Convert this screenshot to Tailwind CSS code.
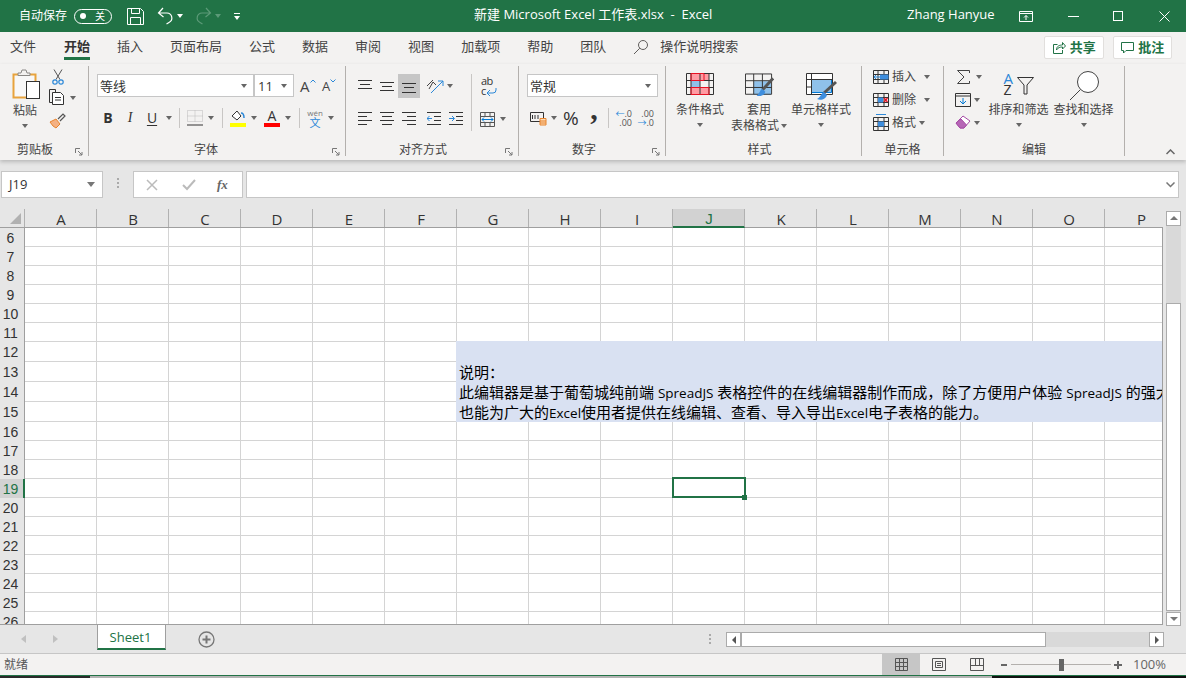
<!doctype html>
<html>
<head>
<meta charset="utf-8">
<script src="https://cdn.jsdelivr.net/npm/@tailwindcss/browser@4"></script>
<title>Excel</title>
</head>
<body class="m-0 w-[1186px] h-[678px] overflow-hidden bg-[#e6e6e6] font-['Open_Sans','Noto_Sans_CJK_SC',sans-serif] text-[#444]">

<!-- Title bar -->
<div class="h-[32px] bg-[#217346] flex items-center text-white">
    <span class="ml-[19px] w-[48px] text-[12px] whitespace-nowrap">自动保存</span>
    <div class="ml-[7px] w-[38px] h-[15px] rounded-full border border-white flex items-center justify-between pl-[5px] pr-[6px]">
        <i class="block w-[6px] h-[6px] rounded-full bg-white"></i>
        <span class="text-[10px] leading-none">关</span>
    </div>
    <svg class="ml-[15px] w-[17px] h-[17px]" viewBox="0 0 17 17" fill="none" stroke="#fff"><path d="M.5.5h13l3 3v13H.5zM4.5.5v5h8v-5M3.5 16.5v-7h10v7"/></svg>
    <svg class="ml-[13px] w-[17px] h-[18px]" viewBox="0 0 17 18" fill="none" stroke="#fff" stroke-width="1.2"><path d="M6 1L1.5 6l5 4M2 6h8a5 5 0 0 1 2 9.5L9.500 17"/></svg>
    <i class="ml-[3px] block w-0 h-0 border-x-[3.5px] border-x-transparent border-t-[4px] border-t-white"></i>
    <svg class="ml-[12px] w-[17px] h-[18px]" viewBox="0 0 17 18" fill="none" stroke="#5c9a78" stroke-width="1.2"><path d="M11 1l4.500 5-5 4M15 6H7a5 5 0 0 0-2 9.500L7.500 17"/></svg>
    <i class="ml-[3px] block w-0 h-0 border-x-[3.5px] border-x-transparent border-t-[4px] border-t-[#5c9a78]"></i>
    <div class="ml-[13px] flex flex-col items-center gap-[2px]">
        <i class="block w-[6px] h-px bg-white"></i>
        <i class="block w-0 h-0 border-x-[3.5px] border-x-transparent border-t-[4px] border-t-white"></i>
    </div>
    <span class="ml-[234px] -mt-[2px] w-[232px] text-[13px] whitespace-pre">新建 Microsoft Excel 工作表.xlsx  -  Excel</span>
    <span class="ml-[201px] -mt-[2px] w-[84px] text-[13px] whitespace-nowrap">Zhang Hanyue</span>
    <svg class="ml-[28px] w-[14px] h-[11px]" viewBox="0 0 14 11" fill="none" stroke="#fff"><path d="M.5.5h13v10H.5zM.5 2.500h13M7 9V4.500M5 6.500l2-2 2 2"/></svg>
    <i class="ml-[35px] block w-[11px] h-px bg-white"></i>
    <i class="ml-[34px] block w-[10px] h-[10px] border border-white"></i>
    <svg class="ml-[36px] w-[11px] h-[11px]" viewBox="0 0 11 11" stroke="#fff"><path d="M.5.5l10 10M10.500.5l-10 10"/></svg>
</div>

<!-- Tabs -->
<div class="h-[32px] bg-[#f3f2f1] flex items-start text-[13px] text-[#444]">
    <div class="flex gap-[27px] pl-[10px] pt-[5px] leading-[18px]">
        <span>文件</span>
        <span class="relative font-bold text-[#333] ml-[1px]">开始<i class="absolute left-0 right-0 top-[20px] h-[3px] bg-[#217346]"></i></span>
        <span>插入</span>
        <span>页面布局</span>
        <span>公式</span>
        <span>数据</span>
        <span>审阅</span>
        <span>视图</span>
        <span>加载项</span>
        <span>帮助</span>
        <span>团队</span>
    </div>
    <svg class="ml-[27px] mt-[7px] w-[16px] h-[16px]" viewBox="0 0 16 16" fill="none" stroke="#605e5c"><circle cx="10" cy="6" r="4.500"/><path d="M6.800 9.200L1 15"/></svg>
    <span class="ml-[11px] pt-[5px] leading-[18px]">操作说明搜索</span>
    <div class="ml-[306px] mt-[4px] w-[60px] h-[23px] bg-white border border-[#e1dfdd] rounded-[2px] flex items-center justify-center gap-[4px]">
        <svg class="w-[13px] h-[13px]" viewBox="0 0 13 13" fill="none" stroke="#217346"><path d="M4.500 3.500H.5v9h9V9M3.500 9c0-4 3-5 6-5V1.500l3 3.500-3 3V6c-2.500 0-4.500.5-6 3z"/></svg>
        <span class="font-bold text-[#217346]">共享</span>
    </div>
    <div class="ml-[9px] mt-[4px] w-[59px] h-[23px] bg-white border border-[#e1dfdd] rounded-[2px] flex items-center justify-center gap-[4px]">
        <svg class="w-[13px] h-[13px]" viewBox="0 0 13 13" fill="none" stroke="#217346"><path d="M.5 1.500h12v8H5L2.500 12V9.500h-2z"/></svg>
        <span class="font-bold text-[#217346]">批注</span>
    </div>
</div>

<!-- Ribbon -->
<div class="relative h-[96px] bg-[#f3f2f1] shadow-[0_2px_4px_rgba(0,0,0,0.2)] flex pt-[2px] text-[12px] leading-[16px] text-[#444]">

    <!-- Clipboard -->
    <div class="w-[89px] h-[90px] border-r border-[#b3b0ad] flex flex-col">
        <div class="h-[77px] flex">
            <div class="w-[46px] flex flex-col items-center pl-[4px]">
                <svg class="ml-[4px] mt-[3px] w-[30px] h-[31px]" viewBox="0 0 30 31" fill="none"><rect x="1.500" y="5.500" width="22" height="23" fill="#f8f8f8" stroke="#e8a33d" stroke-width="2"/><path d="M6 6.500h12V4h-3l-1-3h-4L9 4H6z" fill="#f3f2f1" stroke="#8a8886"/><rect x="14.500" y="12.500" width="13" height="17" fill="#fff" stroke="#333"/></svg>
                <span class="mt-[3px]">粘贴</span>
                <i class="mt-[5px] block w-0 h-0 border-x-[3.5px] border-x-transparent border-t-[4px] border-t-[#666]"></i>
            </div>
            <div class="ml-[3px] flex flex-col">
                <svg class="ml-[3px] mt-[3px] w-[12px] h-[16px]" viewBox="0 0 12 16" fill="none"><path d="M2 .5l6 10M10 .5l-6 10" stroke="#555"/><circle cx="3" cy="13" r="2.200" stroke="#2b88d8" stroke-width="1.200"/><circle cx="9" cy="13" r="2.200" stroke="#2b88d8" stroke-width="1.200"/></svg>
                <div class="mt-[4px] flex items-center">
                    <svg class="w-[17px] h-[17px]" viewBox="0 0 17 17" fill="none" stroke="#333"><path d="M6.500 3.500V.5h-6v13h3"/><path d="M3.500 3.500h8l3 3v9h-11z" fill="#fff"/><path d="M6 8.500h6M6 11h6"/></svg>
                    <i class="ml-[4px] block w-0 h-0 border-x-[3.5px] border-x-transparent border-t-[4px] border-t-[#666]"></i>
                </div>
                <svg class="mt-[7px] w-[17px] h-[16px]" viewBox="0 0 17 16" fill="none"><path d="M1 9l6-3 4 5-4 4-3-2z" fill="#f4b183" stroke="#e8842d"/><path d="M9 6l5-5 2 2-5 5" stroke="#555" stroke-width="1.200"/></svg>
            </div>
        </div>
        <div class="relative h-[13px] flex justify-center pr-[18px] items-start leading-[14px]">剪贴板
            <svg class="absolute right-[5px] bottom-0 w-[8px] h-[8px]" viewBox="0 0 8 8" fill="none" stroke="#777"><path d="M.5 5V.5H5M3 3l4 4M4 7h3V4"/></svg>
        </div>
    </div>

    <!-- Font -->
    <div class="w-[257px] h-[90px] border-r border-[#b3b0ad] flex flex-col">
        <div class="h-[77px] pl-[8px] pt-[8px]">
            <div class="flex items-center">
                <div class="w-[157px] h-[23px] bg-white border border-[#c6c6c6] flex items-center justify-between pl-[2px] pr-[6px] text-[13px] text-[#333]">等线<i class="block w-0 h-0 border-x-[3.5px] border-x-transparent border-t-[4px] border-t-[#666]"></i></div>
                <div class="w-[40px] h-[23px] bg-white border border-[#c6c6c6] flex items-center justify-between pl-[3px] pr-[6px] text-[13px] text-[#333]">11<i class="block w-0 h-0 border-x-[3.5px] border-x-transparent border-t-[4px] border-t-[#666]"></i></div>
                <div class="ml-[6px] w-[16px] flex items-start">
                    <span class="text-[15px] leading-[18px]">A</span>
                    <svg class="mt-[2px] w-[6px] h-[4px]" viewBox="0 0 6 4" fill="none" stroke="#2b88d8"><path d="M.5 3.500L3 1l2.500 2.500"/></svg>
                </div>
                <div class="ml-[6px] w-[16px] flex items-start">
                    <span class="text-[13px] leading-[18px]">A</span>
                    <svg class="mt-[2px] w-[6px] h-[4px]" viewBox="0 0 6 4" fill="none" stroke="#2b88d8"><path d="M.5.5L3 3 5.500.5"/></svg>
                </div>
            </div>
            <div class="mt-[9px] h-[24px] flex items-center text-[14px] text-[#333]">
                <span class="w-[22px] text-center font-bold">B</span>
                <span class="w-[22px] text-center italic font-['Liberation_Serif',serif]">I</span>
                <span class="w-[22px] text-center underline underline-offset-2">U</span>
                <div class="w-[11px] flex justify-center"><i class="block w-0 h-0 border-x-[3.5px] border-x-transparent border-t-[4px] border-t-[#666]"></i></div>
                <i class="ml-[5px] block w-px h-[20px] bg-[#c8c6c4]"></i>
                <svg class="ml-[7px] w-[16px] h-[16px]" viewBox="0 0 16 16" fill="none"><path d="M.5 .5h15v11H.5zM8 .5v11M.5 6h15" stroke="#bbb" stroke-dasharray="1 1"/><path d="M0 15h16" stroke="#333"/></svg>
                <div class="ml-[4px] w-[8px] flex justify-center"><i class="block w-0 h-0 border-x-[3.5px] border-x-transparent border-t-[4px] border-t-[#666]"></i></div>
                <i class="ml-[7px] block w-px h-[20px] bg-[#c8c6c4]"></i>
                <svg class="ml-[7px] w-[16px] h-[18px]" viewBox="0 0 16 18" fill="none"><path d="M2 7l5-5 4 5-4 4z" fill="#fff" stroke="#333"/><path d="M11 4c2 0 3 2 3 5" stroke="#2b88d8" stroke-width="1.500"/><rect y="14" width="16" height="4" fill="#ffff00"/></svg>
                <div class="ml-[4px] w-[8px] flex justify-center"><i class="block w-0 h-0 border-x-[3.5px] border-x-transparent border-t-[4px] border-t-[#666]"></i></div>
                <div class="ml-[6px] w-[16px] flex flex-col items-center"><span class="text-[14px] leading-[14px]">A</span><i class="block w-[16px] h-[4px] bg-[#ff0000]"></i></div>
                <div class="ml-[4px] w-[8px] flex justify-center"><i class="block w-0 h-0 border-x-[3.5px] border-x-transparent border-t-[4px] border-t-[#666]"></i></div>
                <i class="ml-[7px] block w-px h-[20px] bg-[#c8c6c4]"></i>
                <div class="ml-[7px] w-[16px] flex flex-col items-center"><span class="text-[8px] leading-[9px] text-[#777]">wén</span><span class="text-[11px] leading-[11px] text-[#2b88d8]">文</span></div>
                <div class="ml-[4px] w-[8px] flex justify-center"><i class="block w-0 h-0 border-x-[3.5px] border-x-transparent border-t-[4px] border-t-[#666]"></i></div>
            </div>
        </div>
        <div class="relative h-[13px] text-center leading-[14px] pr-[22px]">字体
            <svg class="absolute right-[5px] bottom-0 w-[8px] h-[8px]" viewBox="0 0 8 8" fill="none" stroke="#777"><path d="M.5 5V.5H5M3 3l4 4M4 7h3V4"/></svg>
        </div>
    </div>

    <!-- Alignment -->
    <div class="w-[173px] h-[90px] border-r border-[#b3b0ad] flex flex-col">
        <div class="h-[77px] flex pt-[8px]">
            <div class="pl-[12px] w-[125px]">
                <div class="h-[24px] flex items-center">
                    <svg class="w-[14px] h-[14px]" viewBox="0 0 14 14" stroke="#333"><path d="M0 1.500h14M2 5.500h10M0 9.500h14"/></svg>
                    <svg class="ml-[8px] w-[14px] h-[14px]" viewBox="0 0 14 14" stroke="#333"><path d="M0 3.500h14M2 7.500h10M0 11.500h14"/></svg>
                    <div class="ml-[4px] w-[22px] h-[24px] bg-[#c6c6c6] flex items-center justify-center">
                        <svg class="w-[14px] h-[14px]" viewBox="0 0 14 14" stroke="#333"><path d="M0 4.500h14M2 8.500h10M0 13.500h14"/></svg>
                    </div>
                    <svg class="ml-[6px] w-[18px] h-[18px]" viewBox="0 0 18 18" fill="none"><path d="M1 9l6-6M3 12l4-7 3 3" stroke="#444"/><path d="M5 16L17 4M12 4h5v5" stroke="#2b88d8"/></svg>
                    <i class="ml-[3px] block w-0 h-0 border-x-[3.5px] border-x-transparent border-t-[4px] border-t-[#666]"></i>
                </div>
                <div class="mt-[9px] h-[24px] flex items-center">
                    <svg class="w-[14px] h-[14px]" viewBox="0 0 14 14" stroke="#333"><path d="M0 .5h14M0 4.500h9M0 8.500h14M0 12.500h9"/></svg>
                    <svg class="ml-[8px] w-[14px] h-[14px]" viewBox="0 0 14 14" stroke="#333"><path d="M0 .5h14M2 4.500h10M0 8.500h14M2 12.500h10"/></svg>
                    <svg class="ml-[8px] w-[14px] h-[14px]" viewBox="0 0 14 14" stroke="#333"><path d="M0 .5h14M5 4.500h9M0 8.500h14M5 12.500h9"/></svg>
                    <svg class="ml-[11px] w-[14px] h-[14px]" viewBox="0 0 14 14" fill="none"><path d="M0 .5h14M7 4.500h7M7 8.500h7M0 12.500h14" stroke="#333"/><path d="M5 6.500H0M2.500 4L0 6.500 2.500 9" stroke="#2b88d8"/></svg>
                    <svg class="ml-[8px] w-[14px] h-[14px]" viewBox="0 0 14 14" fill="none"><path d="M0 .5h14M7 4.500h7M7 8.500h7M0 12.500h14" stroke="#333"/><path d="M0 6.500h5M3 4l2.500 2.500L3 9" stroke="#2b88d8"/></svg>
                </div>
            </div>
            <i class="block w-px h-[57px] bg-[#c8c6c4]"></i>
            <div class="pl-[8px]">
                <div class="h-[24px] flex items-center pl-[1px]">
                    <div class="relative w-[16px] h-[24px] text-[11px] leading-[10px] text-[#333] pt-[2px] tracking-tighter">ab<br>c
                        <svg class="absolute left-[5px] bottom-[1px] w-[11px] h-[10px]" viewBox="0 0 11 10" fill="none" stroke="#2b88d8"><path d="M10 1v2a3 3 0 0 1-3 3H1M4 3L1 6l3 3"/></svg>
                    </div>
                </div>
                <div class="mt-[9px] h-[24px] flex items-center">
                    <svg class="w-[15px] h-[15px]" viewBox="0 0 15 15" fill="none"><path d="M.5.5h14v14H.5zM.5 4.500h14M.5 10.500h14M5 .5v4M10 .5v4M5 10.500v4M10 10.500v4" stroke="#555"/><path d="M2 7.500h11M4 5.500l-2 2 2 2M11 5.500l2 2-2 2" stroke="#0078d4"/></svg>
                    <i class="ml-[5px] block w-0 h-0 border-x-[3.5px] border-x-transparent border-t-[4px] border-t-[#666]"></i>
                </div>
            </div>
        </div>
        <div class="relative h-[13px] text-center leading-[14px] pr-[18px]">对齐方式
            <svg class="absolute right-[5px] bottom-0 w-[8px] h-[8px]" viewBox="0 0 8 8" fill="none" stroke="#777"><path d="M.5 5V.5H5M3 3l4 4M4 7h3V4"/></svg>
        </div>
    </div>

    <!-- Number -->
    <div class="w-[147px] h-[90px] border-r border-[#b3b0ad] flex flex-col">
        <div class="h-[77px] pl-[8px] pt-[8px]">
            <div class="w-[131px] h-[23px] bg-white border border-[#c6c6c6] flex items-center justify-between pl-[2px] pr-[6px] text-[13px] text-[#333]">常规<i class="block w-0 h-0 border-x-[3.5px] border-x-transparent border-t-[4px] border-t-[#666]"></i></div>
            <div class="mt-[9px] h-[24px] flex items-center pl-[3px]">
                <svg class="w-[17px] h-[16px]" viewBox="0 0 17 16" fill="none"><path d="M.5 2.500h13v9H.5zM2.500 5v4M5 5v4M8 5v4" stroke="#333"/><path d="M10 8.500h6v6.500h-6z" fill="#fbd9b5" stroke="#e8842d"/><path d="M10 11h6M10 13h6" stroke="#e8842d"/></svg>
                <i class="ml-[4px] block w-0 h-0 border-x-[3.5px] border-x-transparent border-t-[4px] border-t-[#666]"></i>
                <span class="ml-[6px] w-[16px] text-[19px] leading-[20px] text-[#333] whitespace-nowrap">%</span>
                <span class="ml-[9px] -mt-[18px] w-[12px] text-[30px] leading-[20px] font-bold text-center text-[#333] font-['Liberation_Serif',serif]">,</span>
                <i class="ml-[8px] block w-px h-[20px] bg-[#c8c6c4]"></i>
                <div class="ml-[7px] w-[16px] flex flex-col text-[9px] leading-[9px] text-[#555] items-end"><span class="whitespace-nowrap"><b class="font-normal text-[#2b88d8]">←</b>.0</span><span>.00</span></div>
                <div class="ml-[6px] w-[16px] flex flex-col text-[9px] leading-[9px] text-[#555] items-end"><span>.00</span><span class="whitespace-nowrap"><b class="font-normal text-[#2b88d8]">→</b>.0</span></div>
            </div>
        </div>
        <div class="relative h-[13px] text-center leading-[14px] pr-[16px]">数字
            <svg class="absolute right-[5px] bottom-0 w-[8px] h-[8px]" viewBox="0 0 8 8" fill="none" stroke="#777"><path d="M.5 5V.5H5M3 3l4 4M4 7h3V4"/></svg>
        </div>
    </div>

    <!-- Styles -->
    <div class="w-[196px] h-[90px] border-r border-[#b3b0ad] flex flex-col">
        <div class="h-[77px] flex pl-[4px] pt-[7px]">
            <div class="w-[60px] flex flex-col items-center">
                <svg class="h-[28px] w-[28px]" viewBox="0 0 28 28" fill="none"><path d="M5 1h18v7H5zM5 15h18v7H5z" fill="#ff9ba3"/><path d="M5 8h9v7H5z" fill="#8fc1ea"/><path d="M.5.5h27v21H.5zM.5 7.500h27M.5 14.500h27M5 .5v21M14 .5v21M23 .5v21" stroke="#333"/><path d="M5 .5h13v7H5zM5 14.500h18v7H5z" stroke="#e81123"/></svg>
                <span class="mt-px">条件格式</span>
                <i class="mt-[5px] block w-0 h-0 border-x-[3.5px] border-x-transparent border-t-[4px] border-t-[#666]"></i>
            </div>
            <div class="w-[58px] flex flex-col items-center">
                <svg class="h-[28px] w-[30px] pl-[1px]" viewBox="0 0 30 28" fill="none"><path d="M9 8h18v14H9z" fill="#8fc1ea"/><path d="M.5.5h27v21H.5zM.5 7.500h27M.5 14.500h27M9 .5v21M18 .5v21" stroke="#333"/><path d="M29 5L18 17" stroke="#555" stroke-width="3"/><path d="M18 16c-3 1-2 4-6 7 4 1 8 0 9-4z" fill="#3e8ede"/></svg>
                <span class="mt-px">套用</span>
                <span class="flex items-center whitespace-nowrap">表格格式<i class="ml-[2px] block w-0 h-0 border-x-[3.5px] border-x-transparent border-t-[4px] border-t-[#666]"></i></span>
            </div>
            <div class="ml-[2px] w-[62px] flex flex-col items-center">
                <svg class="h-[28px] w-[31px]" viewBox="0 0 31 28" fill="none"><path d="M1 1h25v20H1z" fill="#fff"/><path d="M5.500 6.500h20v13h-20z" fill="#8fc1ea" stroke="#0078d4"/><path d="M.5.500h26v21H.5zM.5 6.500h26M.5 14h5M5.500.5v21" stroke="#333"/><path d="M30 9L18 20" stroke="#555" stroke-width="3"/><path d="M18 19c-3 1-3 5-7 7 4 2 9 0 10-4z" fill="#3e8ede"/></svg>
                <span class="mt-px whitespace-nowrap">单元格样式</span>
                <i class="mt-[5px] block w-0 h-0 border-x-[3.5px] border-x-transparent border-t-[4px] border-t-[#666]"></i>
            </div>
        </div>
        <div class="h-[13px] text-center leading-[14px] pr-[8px]">样式</div>
    </div>

    <!-- Cells -->
    <div class="w-[82px] h-[90px] border-r border-[#b3b0ad] flex flex-col">
        <div class="h-[77px] pl-[11px]">
            <div class="h-[23px] -mt-px flex items-center">
                <svg class="w-[16px] h-[14px]" viewBox="0 0 16 14" fill="none"><path d="M.5.5h15v13H.5zM.5 4.500h15M.5 9.500h15M5 .5v13M11 .5v13" stroke="#333"/><path d="M7 4.500h8.500v5H7z" fill="#3e8ede"/><path d="M7 7H1M3 5L1 7l2 2" stroke="#2b88d8"/></svg>
                <span class="ml-[3px] w-[24px]">插入</span>
                <i class="ml-[8px] block w-0 h-0 border-x-[3.5px] border-x-transparent border-t-[4px] border-t-[#666]"></i>
            </div>
            <div class="h-[23px] flex items-center">
                <svg class="w-[16px] h-[14px]" viewBox="0 0 16 14" fill="none"><path d="M.5.5h15v13H.5zM.5 4.500h15M.5 9.500h15M5 .5v13M11 .5v13" stroke="#333"/><path d="M5 4.500h5v5H5z" fill="#3e8ede"/><path d="M11 5l3.500 4M14.500 5L11 9" stroke="#e81123" stroke-width="1.300"/></svg>
                <span class="ml-[3px] w-[24px]">删除</span>
                <i class="ml-[8px] block w-0 h-0 border-x-[3.5px] border-x-transparent border-t-[4px] border-t-[#666]"></i>
            </div>
            <div class="h-[23px] flex items-center">
                <svg class="w-[16px] h-[17px]" viewBox="0 0 16 17" fill="none"><path d="M.5 3.500h15v13H.5zM.5 7.500h15M.5 12.500h15M5 3.500v13M11 3.500v13" stroke="#333"/><path d="M5 7.500h6v5H5z" fill="#3e8ede"/><path d="M3 .5h10" stroke="#2b88d8"/></svg>
                <span class="ml-[3px] w-[24px]">格式</span>
                <i class="ml-[3px] block w-0 h-0 border-x-[3.5px] border-x-transparent border-t-[4px] border-t-[#666]"></i>
            </div>
        </div>
        <div class="h-[13px] text-center leading-[14px]">单元格</div>
    </div>

    <!-- Editing -->
    <div class="w-[181px] h-[90px] border-r border-[#b3b0ad] flex flex-col">
        <div class="h-[77px] flex">
            <div class="w-[44px] pl-[11px]">
                <div class="h-[23px] -mt-px flex items-center">
                    <svg class="ml-[2px] w-[13px] h-[14px]" viewBox="0 0 13 14" fill="none" stroke="#444"><path d="M12.500 3V.5H.5L7 7 .5 13.500h12V11"/></svg>
                    <i class="ml-[6px] block w-0 h-0 border-x-[3.5px] border-x-transparent border-t-[4px] border-t-[#666]"></i>
                </div>
                <div class="h-[23px] flex items-center">
                    <svg class="w-[16px] h-[14px]" viewBox="0 0 16 14" fill="none"><path d="M.5.5h15v13H.5zM.5 3h15" stroke="#333"/><path d="M8 5v6M5 8l3 3 3-3" stroke="#0078d4"/></svg>
                    <i class="ml-[3px] block w-0 h-0 border-x-[3.5px] border-x-transparent border-t-[4px] border-t-[#666]"></i>
                </div>
                <div class="h-[23px] flex items-center">
                    <svg class="w-[16px] h-[15px]" viewBox="0 0 16 15" fill="none"><path d="M1 8l7-7 7 5-6 7H5z" fill="#fff" stroke="#a64ca6"/><path d="M1 8l4 5h4l2.500-3L6 4z" fill="#b666b6" stroke="#a64ca6"/></svg>
                    <i class="ml-[3px] block w-0 h-0 border-x-[3.5px] border-x-transparent border-t-[4px] border-t-[#666]"></i>
                </div>
            </div>
            <div class="w-[61px] flex flex-col items-center pt-[5px]">
                <div class="h-[31px] w-[30px] flex justify-between text-[14px] leading-[12px] text-[#333] pt-[1px]">
                    <div class="flex flex-col">
                        <span class="block text-[#2b88d8] text-[15px]">A</span>
                        <span class="block">Z</span>
                    </div>
                    <svg class="mt-[5px] w-[17px] h-[18px]" viewBox="0 0 17 18" fill="none" stroke="#333"><path d="M.5.5h16L10 8v9H7V8z"/></svg>
                </div>
                <span class="whitespace-nowrap">排序和筛选</span>
                <i class="mt-[5px] block w-0 h-0 border-x-[3.5px] border-x-transparent border-t-[4px] border-t-[#666]"></i>
            </div>
            <div class="ml-[4px] w-[61px] flex flex-col items-center pt-[5px]">
                <svg class="h-[31px] w-[30px]" viewBox="0 0 30 31" fill="none" stroke="#444"><circle cx="19" cy="11" r="10.500" fill="#fff"/><path d="M11.500 18.500L1 29"/></svg>
                <span class="whitespace-nowrap">查找和选择</span>
                <i class="mt-[5px] block w-0 h-0 border-x-[3.5px] border-x-transparent border-t-[4px] border-t-[#666]"></i>
            </div>
        </div>
        <div class="h-[13px] text-center leading-[14px]">编辑</div>
    </div>

    <!-- Collapse -->
    <div class="flex-1 flex justify-end items-end pr-[11px] pb-[5px]">
        <svg class="w-[9px] h-[6px]" viewBox="0 0 9 6" fill="none" stroke="#666" stroke-width="1.500"><path d="M.5 5l4-4 4 4"/></svg>
    </div>
</div>

<!-- Formula bar -->
<div class="h-[45px] pt-[11px] flex items-start">
    <div class="ml-[1px] w-[102px] h-[27px] bg-white border border-[#c6c6c6] flex items-center justify-between pl-[7px] pr-[7px] text-[13px] text-[#333]">J19<i class="block w-0 h-0 border-x-[4px] border-x-transparent border-t-[5px] border-t-[#777]"></i></div>
    <div class="ml-[14px] mt-[7px] flex flex-col gap-[2px]">
        <i class="block w-[2px] h-[2px] bg-[#aaa]"></i>
        <i class="block w-[2px] h-[2px] bg-[#aaa]"></i>
        <i class="block w-[2px] h-[2px] bg-[#aaa]"></i>
    </div>
    <div class="ml-[14px] w-[110px] h-[27px] bg-white border border-[#c6c6c6] flex items-center">
        <svg class="ml-[12px] w-[12px] h-[12px]" viewBox="0 0 12 12" stroke="#bbb" stroke-width="1.500"><path d="M1 1l10 10M11 1L1 11"/></svg>
        <svg class="ml-[24px] w-[14px] h-[12px]" viewBox="0 0 14 12" fill="none" stroke="#bbb" stroke-width="2"><path d="M1 6l4 4 8-9"/></svg>
        <span class="ml-[21px] text-[13px] italic font-bold text-[#666] font-['Liberation_Serif',serif]">fx</span>
    </div>
    <div class="ml-[3px] w-[933px] h-[27px] bg-white border border-[#c6c6c6] flex items-center justify-end pr-[3px]">
        <svg class="w-[9px] h-[6px]" viewBox="0 0 9 6" fill="none" stroke="#777" stroke-width="1.500"><path d="M.5.5l4 4 4-4"/></svg>
    </div>
</div>

<!-- Sheet -->
<div class="h-[421px] flex items-start text-[14px] text-[#333]">
    <div class="w-[1163px] h-[421px] pt-[4px] flex flex-col">
        <!-- Column headers -->
        <div class="h-[19px] flex shrink-0 border-b border-[#9f9f9f] text-[15px] leading-[20px] text-center [&>div]:shrink-0 [&>div]:pl-[1px]">
            <div class="w-[25px] border-r border-[#b1b1b1] flex items-end justify-end pb-[3px] pr-[3px]">
                <i class="block w-0 h-0 border-l-[11px] border-l-transparent border-b-[11px] border-b-[#b1b1b1]"></i>
            </div>
            <div class="w-[72px] border-r border-[#b1b1b1]">A</div>
            <div class="w-[72px] border-r border-[#b1b1b1]">B</div>
            <div class="w-[72px] border-r border-[#b1b1b1]">C</div>
            <div class="w-[72px] border-r border-[#b1b1b1]">D</div>
            <div class="w-[72px] border-r border-[#b1b1b1]">E</div>
            <div class="w-[72px] border-r border-[#b1b1b1]">F</div>
            <div class="w-[72px] border-r border-[#b1b1b1]">G</div>
            <div class="w-[72px] border-r border-[#b1b1b1]">H</div>
            <div class="w-[72px] border-r border-[#b1b1b1]">I</div>
            <div class="w-[72px] h-[19px] border-r border-[#b1b1b1] border-b-2 border-b-[#217346] bg-[#d2d2d2] text-[#217346] font-['Liberation_Sans',sans-serif]">J</div>
            <div class="w-[72px] border-r border-[#b1b1b1]">K</div>
            <div class="w-[72px] border-r border-[#b1b1b1]">L</div>
            <div class="w-[72px] border-r border-[#b1b1b1]">M</div>
            <div class="w-[72px] border-r border-[#b1b1b1]">N</div>
            <div class="w-[72px] border-r border-[#b1b1b1]">O</div>
            <div class="w-[58px]"><span class="block w-[71px]">P</span></div>
        </div>
        <!-- Rows -->
        <div class="relative h-[397px] overflow-hidden border-r border-[#9f9f9f] border-b bg-white leading-[20px] [&>div]:flex [&>div>b]:w-[25px] [&>div>b]:shrink-0 [&>div>b]:font-normal [&>div>b]:font-['Liberation_Sans',sans-serif] [&>div>b]:pr-[3px] [&>div>b]:text-center [&>div>b]:bg-[#e6e6e6] [&>div>b]:border-r [&>div>b]:border-[#9f9f9f]">
            <div class="h-[19px]"><b>6</b><div class="flex-1 border-b border-[#d4d4d4] bg-[repeating-linear-gradient(90deg,transparent_0,transparent_71px,#d4d4d4_71px,#d4d4d4_72px)]"></div></div>
            <div class="h-[19px]"><b>7</b><div class="flex-1 border-b border-[#d4d4d4] bg-[repeating-linear-gradient(90deg,transparent_0,transparent_71px,#d4d4d4_71px,#d4d4d4_72px)]"></div></div>
            <div class="h-[19px]"><b>8</b><div class="flex-1 border-b border-[#d4d4d4] bg-[repeating-linear-gradient(90deg,transparent_0,transparent_71px,#d4d4d4_71px,#d4d4d4_72px)]"></div></div>
            <div class="h-[19px]"><b>9</b><div class="flex-1 border-b border-[#d4d4d4] bg-[repeating-linear-gradient(90deg,transparent_0,transparent_71px,#d4d4d4_71px,#d4d4d4_72px)]"></div></div>
            <div class="h-[19px]"><b>10</b><div class="flex-1 border-b border-[#d4d4d4] bg-[repeating-linear-gradient(90deg,transparent_0,transparent_71px,#d4d4d4_71px,#d4d4d4_72px)]"></div></div>
            <div class="h-[19px]"><b>11</b><div class="flex-1 border-b border-[#d4d4d4] bg-[repeating-linear-gradient(90deg,transparent_0,transparent_71px,#d4d4d4_71px,#d4d4d4_72px)]"></div></div>
            <div class="h-[20px]"><b>12</b><div class="w-[432px] border-b border-[#d4d4d4] bg-[repeating-linear-gradient(90deg,transparent_0,transparent_71px,#d4d4d4_71px,#d4d4d4_72px)]"></div><div class="flex-1 -ml-px -mt-px bg-[#d9e1f2]"></div></div>
            <div class="h-[20px]"><b>13</b><div class="w-[432px] border-b border-[#d4d4d4] bg-[repeating-linear-gradient(90deg,transparent_0,transparent_71px,#d4d4d4_71px,#d4d4d4_72px)]"></div><div class="flex-1 min-w-0 -ml-px pl-[3px] bg-[#d9e1f2] text-[15px] leading-[21px] text-black whitespace-nowrap overflow-hidden">说明：</div></div>
            <div class="h-[20px]"><b>14</b><div class="w-[432px] border-b border-[#d4d4d4] bg-[repeating-linear-gradient(90deg,transparent_0,transparent_71px,#d4d4d4_71px,#d4d4d4_72px)]"></div><div class="flex-1 min-w-0 -ml-px pl-[3px] bg-[#d9e1f2] text-[15px] leading-[21px] text-black whitespace-nowrap overflow-hidden">此编辑器是基于葡萄城纯前端 <span class="text-[13.5px]">SpreadJS</span> 表格控件的在线编辑器制作而成，除了方便用户体验 <span class="text-[13.5px]">SpreadJS</span> 的强大</div></div>
            <div class="h-[20px]"><b>15</b><div class="w-[432px] border-b border-[#d4d4d4] bg-[repeating-linear-gradient(90deg,transparent_0,transparent_71px,#d4d4d4_71px,#d4d4d4_72px)]"></div><div class="flex-1 min-w-0 -ml-px pl-[3px] bg-[#d9e1f2] text-[15px] leading-[21px] text-black whitespace-nowrap overflow-hidden">也能为广大的<span class="text-[13.5px]">Excel</span>使用者提供在线编辑、查看、导入导出<span class="text-[13.5px]">Excel</span>电子表格的能力。</div></div>
            <div class="h-[19px]"><b>16</b><div class="flex-1 border-b border-[#d4d4d4] bg-[repeating-linear-gradient(90deg,transparent_0,transparent_71px,#d4d4d4_71px,#d4d4d4_72px)]"></div></div>
            <div class="h-[19px]"><b>17</b><div class="flex-1 border-b border-[#d4d4d4] bg-[repeating-linear-gradient(90deg,transparent_0,transparent_71px,#d4d4d4_71px,#d4d4d4_72px)]"></div></div>
            <div class="h-[19px]"><b>18</b><div class="flex-1 border-b border-[#d4d4d4] bg-[repeating-linear-gradient(90deg,transparent_0,transparent_71px,#d4d4d4_71px,#d4d4d4_72px)]"></div></div>
            <div class="h-[19px] relative"><b class="text-[#217346] !bg-[#d2d2d2]">19</b><div class="flex-1 border-b border-[#d4d4d4] bg-[repeating-linear-gradient(90deg,transparent_0,transparent_71px,#d4d4d4_71px,#d4d4d4_72px)]"></div>
                <!-- Selected cell -->
                <div class="absolute left-[672px] top-[-2px] w-[74px] h-[21px] border-2 border-[#217346]"></div>
                <i class="absolute left-[742px] top-[16px] w-[5px] h-[5px] bg-[#217346] border-0"></i>
                <i class="absolute left-[23px] top-0 w-[2px] h-[19px] bg-[#217346]"></i>
            </div>
            <div class="h-[19px]"><b>20</b><div class="flex-1 border-b border-[#d4d4d4] bg-[repeating-linear-gradient(90deg,transparent_0,transparent_71px,#d4d4d4_71px,#d4d4d4_72px)]"></div></div>
            <div class="h-[19px]"><b>21</b><div class="flex-1 border-b border-[#d4d4d4] bg-[repeating-linear-gradient(90deg,transparent_0,transparent_71px,#d4d4d4_71px,#d4d4d4_72px)]"></div></div>
            <div class="h-[19px]"><b>22</b><div class="flex-1 border-b border-[#d4d4d4] bg-[repeating-linear-gradient(90deg,transparent_0,transparent_71px,#d4d4d4_71px,#d4d4d4_72px)]"></div></div>
            <div class="h-[19px]"><b>23</b><div class="flex-1 border-b border-[#d4d4d4] bg-[repeating-linear-gradient(90deg,transparent_0,transparent_71px,#d4d4d4_71px,#d4d4d4_72px)]"></div></div>
            <div class="h-[19px]"><b>24</b><div class="flex-1 border-b border-[#d4d4d4] bg-[repeating-linear-gradient(90deg,transparent_0,transparent_71px,#d4d4d4_71px,#d4d4d4_72px)]"></div></div>
            <div class="h-[19px]"><b>25</b><div class="flex-1 border-b border-[#d4d4d4] bg-[repeating-linear-gradient(90deg,transparent_0,transparent_71px,#d4d4d4_71px,#d4d4d4_72px)]"></div></div>
            <div class="h-[19px]"><b>26</b><div class="flex-1 border-b border-[#d4d4d4] bg-[repeating-linear-gradient(90deg,transparent_0,transparent_71px,#d4d4d4_71px,#d4d4d4_72px)]"></div></div>
        </div>
    </div>
    <!-- Vertical scrollbar -->
    <div class="ml-[3px] mt-[6px] w-[15px] h-[415px] bg-[#d9d9d9] flex flex-col">
        <div class="h-[15px] bg-white border border-[#ababab] flex items-center justify-center"><i class="block w-0 h-0 border-x-[4px] border-x-transparent border-b-[4px] border-b-[#777]"></i></div>
        <div class="mt-[77px] h-[309px] bg-white border border-[#ababab]"></div>
        <div class="mt-px h-[14px] bg-white border border-[#ababab] flex items-center justify-center"><i class="block w-0 h-0 border-x-[4px] border-x-transparent border-t-[4px] border-t-[#777]"></i></div>
    </div>
</div>

<!-- Sheet tabs -->
<div class="h-[27px] flex items-start">
    <svg class="ml-[21px] mt-[9px] w-[5px] h-[8px]" viewBox="0 0 5 8" fill="#c0c0c0"><path d="M5 0v8L0 4z"/></svg>
    <svg class="ml-[27px] mt-[9px] w-[5px] h-[8px]" viewBox="0 0 5 8" fill="#c0c0c0"><path d="M0 0v8l5-4z"/></svg>
    <div class="ml-[39px] -mt-px w-[69px] h-[25px] bg-white border-x border-[#9f9f9f] border-b-2 border-b-[#217346] text-center text-[13px] leading-[25px] pr-[2px] text-[#217346]">Sheet1</div>
    <svg class="ml-[32px] mt-[5px] w-[17px] h-[17px]" viewBox="0 0 17 17" fill="none" stroke="#777"><circle cx="8.500" cy="8.500" r="7.500" stroke-width="1.300"/><path d="M4.500 8.500h8M8.500 4.500v8" stroke-width="2"/></svg>
    <div class="ml-[494px] mt-[8px] flex flex-col gap-[2px]">
        <i class="block w-[2px] h-[2px] bg-[#aaa]"></i>
        <i class="block w-[2px] h-[2px] bg-[#aaa]"></i>
        <i class="block w-[2px] h-[2px] bg-[#aaa]"></i>
    </div>
    <div class="ml-[15px] mt-[6px] w-[438px] h-[15px] bg-[#d9d9d9] flex">
        <div class="w-[15px] bg-white border border-[#ababab] flex items-center justify-center"><i class="block w-0 h-0 border-y-[4px] border-y-transparent border-r-[4px] border-r-[#555]"></i></div>
        <div class="w-[305px] bg-white border border-[#ababab]"></div>
        <div class="ml-[103px] w-[15px] bg-white border border-[#ababab] flex items-center justify-center"><i class="block w-0 h-0 border-y-[4px] border-y-transparent border-l-[4px] border-l-[#555]"></i></div>
    </div>
</div>

<!-- Status bar -->
<div class="h-[22px] bg-[#f3f2f1] border-t border-[#c6c6c6] flex items-center text-[12px] text-[#555]">
    <span class="ml-[4px] w-[24px]">就绪</span>
    <div class="ml-[854px] w-[38px] h-[21px] bg-[#c6c6c6] flex items-center justify-center">
        <svg class="w-[13px] h-[13px]" viewBox="0 0 13 13" fill="none" stroke="#555"><path d="M.5.5h12v12H.5zM.5 4.500h12M.5 8.500h12M4.500.5v12M8.500.5v12"/></svg>
    </div>
    <svg class="ml-[12px] w-[14px] h-[13px]" viewBox="0 0 14 13" fill="none" stroke="#555"><path d="M.5.5h13v12H.5zM3.500 3.500h7v6h-7zM5 5.500h4M5 7.500h4"/></svg>
    <svg class="ml-[24px] w-[14px] h-[13px]" viewBox="0 0 14 13" fill="none" stroke="#555"><path d="M.5.5h13v12H.5zM.5 7.500h13M5.500.5v7M9.500.5v7"/></svg>
    <i class="ml-[17px] block w-[6px] h-[2px] bg-[#666]"></i>
    <div class="ml-[4px] w-[100px] h-[12px] flex items-center">
        <i class="block w-[48px] h-px bg-[#b3b0ad]"></i>
        <i class="block w-[5px] h-[12px] bg-[#666]"></i>
        <i class="block w-[47px] h-px bg-[#b3b0ad]"></i>
    </div>
    <svg class="ml-[3px] w-[8px] h-[8px]" viewBox="0 0 8 8" stroke="#666" stroke-width="2"><path d="M0 4h8M4 0v8"/></svg>
    <span class="ml-[11px] text-[13px] text-[#666]">100%</span>
</div>

<!-- Window edge and what shows below it -->
<div class="h-px bg-[#217346]"></div>
<div class="h-[2px] flex">
    <i class="block w-[90px] bg-[#2a2a2a]"></i>
    <i class="block w-[902px] bg-[#b4b4b4]"></i>
    <i class="block flex-1 bg-[#111]"></i>
</div>

</body>
</html>
